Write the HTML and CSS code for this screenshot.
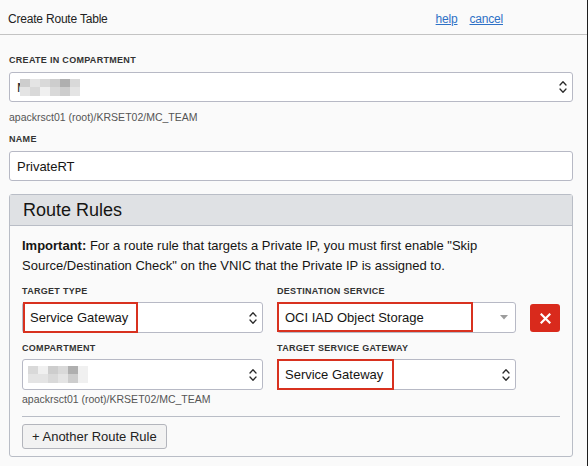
FILE: index.html
```html
<!DOCTYPE html>
<html lang="en">
<head>
<meta charset="utf-8">
<title>Create Route Table</title>
<link rel="stylesheet" href="styles.css">
</head>
<body>
<div class="page">
  <header class="topbar">
    <h1 class="title">Create Route Table</h1>
    <nav class="links"><a href="#">help</a><a href="#">cancel</a></nav>
  </header>

  <main class="content">
    <div class="field">
      <label class="label">Create in Compartment</label>
      <div class="control select">
        <span class="value"><span class="m">M</span><span class="blur blur-a"><i class="s3"></i><i class="s1"></i><i class="s2"></i><i class="s3"></i><i class="s5"></i><i class="s2"></i><i class="s1"></i><i class="s2"></i><i class="s0"></i><i class="s2"></i><i class="s3"></i><i class="s1"></i></span></span>
        <svg class="updown" width="8" height="14" viewBox="0 0 8 14"><path d="M1 5 L4 1.8 L7 5 M1 9 L4 12.2 L7 9" fill="none" stroke="#2a2a2a" stroke-width="1.3" stroke-linecap="round" stroke-linejoin="round"/></svg>
      </div>
      <div class="help-text">apackrsct01 (root)/KRSET02/MC_TEAM</div>
    </div>

    <div class="field">
      <label class="label">Name</label>
      <div class="control">PrivateRT</div>
    </div>

    <section class="panel">
      <h2 class="panel-head">Route Rules</h2>
      <div class="panel-body">
        <p class="note"><b>Important:</b> For a route rule that targets a Private IP, you must first enable "Skip Source/Destination Check" on the VNIC that the Private IP is assigned to.</p>

        <div class="rule-row">
          <div class="rfield">
            <label class="label">Target Type</label>
            <div class="control select">
              <span class="value">Service Gateway</span>
              <svg class="updown" width="8" height="14" viewBox="0 0 8 14"><path d="M1 5 L4 1.8 L7 5 M1 9 L4 12.2 L7 9" fill="none" stroke="#2a2a2a" stroke-width="1.3" stroke-linecap="round" stroke-linejoin="round"/></svg>
              <span class="hl hl-tt"></span>
            </div>
          </div>
          <div class="rfield">
            <label class="label">Destination Service</label>
            <div class="control select">
              <span class="value">OCI IAD Object Storage</span>
              <svg class="caret" width="8" height="5" viewBox="0 0 8 5"><path d="M0 0 L8 0 L4 4.5 Z" fill="#9c9c9c"/></svg>
              <span class="hl hl-ds"></span>
            </div>
          </div>
          <button class="del" type="button" aria-label="Remove rule">
            <svg width="11" height="11" viewBox="0 0 11 11"><path d="M1.5 1.5 L9.5 9.5 M9.5 1.5 L1.5 9.5" stroke="#fff" stroke-width="2.2" stroke-linecap="square"/></svg>
          </button>
        </div>

        <div class="rule-row">
          <div class="rfield">
            <label class="label">Compartment</label>
            <div class="control select">
              <span class="value"><span class="blur blur-b"><i class="s2"></i><i class="s0"></i><i class="s3"></i><i class="s2"></i><i class="s5"></i><i class="s0"></i><i class="s1"></i><i class="s1"></i><i class="s2"></i><i class="s1"></i><i class="s3"></i><i class="s0"></i></span></span>
              <svg class="updown" width="8" height="14" viewBox="0 0 8 14"><path d="M1 5 L4 1.8 L7 5 M1 9 L4 12.2 L7 9" fill="none" stroke="#2a2a2a" stroke-width="1.3" stroke-linecap="round" stroke-linejoin="round"/></svg>
            </div>
            <div class="help-text help-tight">apackrsct01 (root)/KRSET02/MC_TEAM</div>
          </div>
          <div class="rfield">
            <label class="label">Target Service Gateway</label>
            <div class="control select">
              <span class="value">Service Gateway</span>
              <svg class="updown" width="8" height="14" viewBox="0 0 8 14"><path d="M1 5 L4 1.8 L7 5 M1 9 L4 12.2 L7 9" fill="none" stroke="#2a2a2a" stroke-width="1.3" stroke-linecap="round" stroke-linejoin="round"/></svg>
              <span class="hl hl-tsg"></span>
            </div>
          </div>
          <div></div>
        </div>

        <div class="sep"></div>
        <button class="add" type="button">+ Another Route Rule</button>
      </div>
    </section>
  </main>
</div>
</body>
</html>
```

FILE: styles.css
```css
html, body {
  margin: 0;
  padding: 0;
  background: #fafafa;
}

body {
  font-family: "Liberation Sans", Arial, sans-serif;
  color: #161513;
  overflow: hidden;
}

.page {
  width: 588px;
  height: 466px;
  box-sizing: border-box;
  border-right: 1px solid #1e1e1e;
  background: #fafafa;
}

.topbar {
  display: flex;
  justify-content: space-between;
  align-items: center;
  height: 29px;
  padding: 5px 84px 0 8px;
  border-bottom: 1px solid #c3c3c3;
}

.title {
  margin: 0;
  font-size: 12px;
  font-weight: normal;
  letter-spacing: -0.2px;
  line-height: 29px;
  color: #222;
}

.links {
  display: flex;
  gap: 12px;
  font-size: 12px;
  letter-spacing: -0.2px;
  line-height: 29px;
}

.links a {
  color: #2e71c6;
  text-decoration: underline;
}

.content {
  padding: 19px 14px 0 9px;
}

.field + .field {
  margin-top: 9px;
}

.label {
  display: block;
  font-size: 9px;
  font-weight: bold;
  line-height: 13px;
  letter-spacing: 0.3px;
  text-transform: uppercase;
  color: #333;
  margin-bottom: 5px;
}

.control {
  position: relative;
  display: flex;
  align-items: center;
  height: 30px;
  box-sizing: border-box;
  border: 1px solid #b7b9c5;
  border-radius: 3px;
  background: #fff;
  padding: 0 5px 0 7px;
  font-size: 13px;
  color: #161513;
}

.value {
  display: flex;
  align-items: center;
}

.updown, .caret {
  margin-left: auto;
  flex: none;
}

.caret {
  margin-right: 2px;
}

.help-text {
  font-size: 10.5px;
  line-height: 14px;
  color: #555;
  margin-top: 8px;
}

.help-tight {
  margin-top: 2px;
}

/* pixelated (redacted) text */
.m {
  color: #222;
}

.blur {
  display: grid;
  grid-template-columns: repeat(6, 10px);
  grid-template-rows: 8px 9px;
}

.blur-a {
  margin-left: -8px;
}

.blur-b {
  margin-left: -2px;
}

.blur i {
  display: block;
}

.s0 { background: #f0f0f0; }
.s1 { background: #e4e4e4; }
.s2 { background: #d9d9d9; }
.s3 { background: #cdcdcd; }
.s5 { background: #afafaf; }

.panel {
  margin-top: 13px;
  border: 1px solid #b9bdc6;
  border-radius: 3px;
}

.panel-head {
  margin: 0;
  height: 30px;
  line-height: 30px;
  padding-left: 13px;
  background: #dfe1e4;
  border-bottom: 1px solid #b9bdc6;
  font-size: 18px;
  font-weight: normal;
  color: #161513;
}

.panel-body {
  padding: 10px 12px 7px 12px;
}

.note {
  margin: 0 0 9px;
  font-size: 13px;
  line-height: 20px;
}

.rule-row {
  display: grid;
  grid-template-columns: 241px 1fr 30px;
  column-gap: 14px;
}

.rule-row + .rule-row {
  margin-top: 9px;
}

.panel .label {
  margin-bottom: 4px;
}

.panel .control {
  height: 31px;
}

.hl {
  position: absolute;
  top: -1px;
  bottom: -1px;
  border: 2px solid #d8311f;
  box-sizing: border-box;
  pointer-events: none;
}

.hl-tt {
  left: 0;
  width: 115px;
}

.hl-ds {
  left: -1px;
  bottom: 0;
  width: 196px;
}

.hl-tsg {
  left: -1px;
  width: 117px;
}

.del {
  align-self: end;
  margin-bottom: 1px;
  width: 30px;
  height: 28px;
  padding: 0;
  border: none;
  border-radius: 3px;
  background: #d92a1c;
  display: flex;
  align-items: center;
  justify-content: center;
}

.sep {
  height: 1px;
  background: #b9bdc6;
  margin: 10px 0 7px;
}

.add {
  height: 25px;
  padding: 0 9px;
  border: 1px solid #b3b5bc;
  border-radius: 3px;
  background: #f2f2f2;
  font-family: "Liberation Sans", Arial, sans-serif;
  font-size: 13px;
  color: #222;
}
```
